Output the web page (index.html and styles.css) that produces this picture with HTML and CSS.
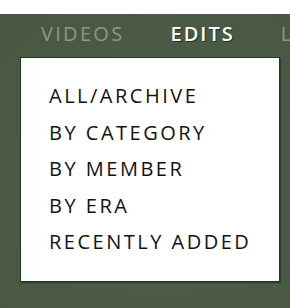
FILE: index.html
```html
<!DOCTYPE html>
<html>
<head>
    <meta charset="utf-8"/>
    <title>Edits</title>
    <link rel="stylesheet" href="styles.css">
</head>
<body>

<div class="top-strip"></div>
<div class="header">
    <ul class="nav">
        <li class="nav-item">VIDEOS</li>
        <li class="nav-item active">EDITS</li>
        <li class="nav-item">LINKS</li>
    </ul>
    <ul class="dropdown">
        <li>ALL/ARCHIVE</li>
        <li>BY CATEGORY</li>
        <li>BY MEMBER</li>
        <li>BY ERA</li>
        <li>RECENTLY ADDED</li>
    </ul>
</div>

</body>
</html>
```

FILE: styles.css
```css
html, body {
    margin: 0;
    padding: 0;
    height: 100%;
    overflow: hidden;
    background: #fff;
}

.top-strip {
    height: 14px;
    background: #fff;
}

.header {
    position: relative;
    height: 294px;
    overflow: hidden;
    background: radial-gradient(ellipse at 55% 60%, #4e5f47 0%, #4a5a44 60%, #475740 100%);
    font-family: "Open Sans", "Liberation Sans", sans-serif;
}

.nav {
    list-style: none;
    margin: 0;
    padding: 6px 0 0 41px;
    display: flex;
    gap: 46px;
    white-space: nowrap;
}

.nav-item {
    font-size: 20px;
    font-weight: 500;
    letter-spacing: 2.3px;
    line-height: 28px;
    color: #8c9a86;
}

.nav-item.active {
    color: #fff;
    font-weight: 600;
    letter-spacing: 2px;
    text-shadow: 1px 1px 0 #1e3418;
}

.dropdown {
    position: absolute;
    top: 43px;
    left: 20px;
    width: 260px;
    height: 225px;
    margin: 0;
    padding: 20px 0 0 28px;
    box-sizing: border-box;
    list-style: none;
    background: #fff;
    border: 1px solid #1e3a18;
    box-shadow: 1px 1px 1px rgba(20, 40, 15, 0.5);
}

.dropdown li {
    font-size: 20px;
    font-weight: 500;
    letter-spacing: 2.5px;
    line-height: 36.5px;
    color: #111;
}
```
